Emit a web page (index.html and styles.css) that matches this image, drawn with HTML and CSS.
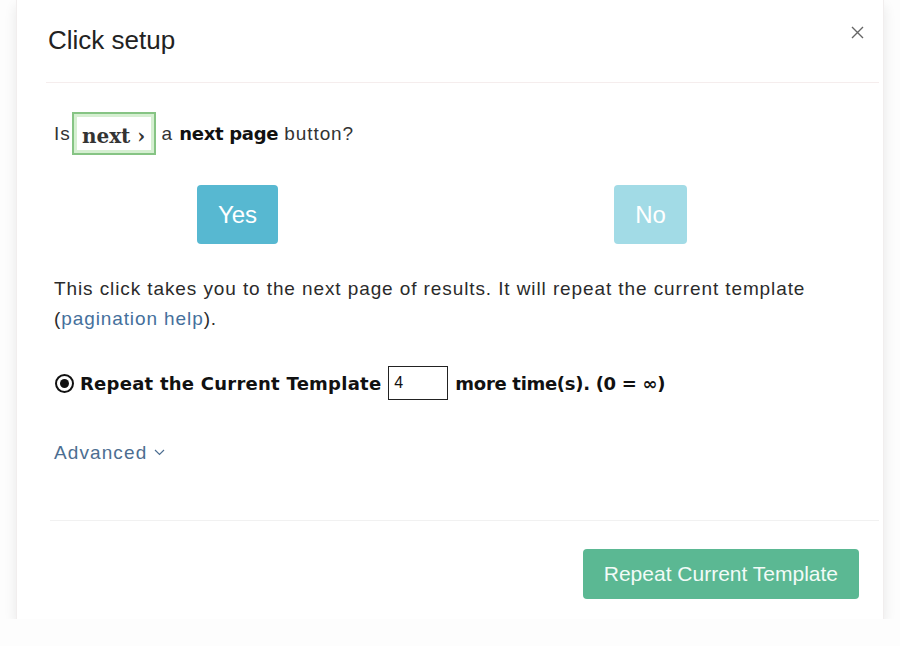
FILE: index.html
```html
<!DOCTYPE html>
<html lang="en">
<head>
<meta charset="utf-8">
<title>Click setup</title>
<link rel="stylesheet" href="styles.css">
</head>
<body>
<div class="modal">
  <div class="modal-header">
    <h1 class="title">Click setup</h1>
    <button class="close" aria-label="Close">
      <svg width="13" height="13" viewBox="0 0 13 13"><path d="M1 1 L12 12 M12 1 L1 12" stroke="#666" stroke-width="1.4" fill="none"/></svg>
    </button>
  </div>
  <div class="modal-body">
    <div class="question">
      <span>Is</span>
      <span class="sample"><span class="sample-text">next ›</span></span>
      <span>a <b>next page</b> button?</span>
    </div>
    <div class="answers">
      <div class="answer"><button class="btn btn-yes">Yes</button></div>
      <div class="answer"><button class="btn btn-no">No</button></div>
    </div>
    <p class="info">This click takes you to the next page of results. It will repeat the current template (<a href="#" class="link">pagination help</a>).</p>
    <div class="repeat-row">
      <span class="radio"></span>
      <span class="strong strong-wide">Repeat the Current Template</span>
      <span class="count">4</span>
      <span class="strong strong-tight">more time(s). (0 = ∞)</span>
    </div>
    <div class="advanced">Advanced<svg class="chev" width="11" height="7" viewBox="0 0 11 7"><path d="M1 1 L5.5 5.5 L10 1" stroke="#4c6e91" stroke-width="1.2" fill="none"/></svg>
    </div>
  </div>
  <div class="modal-footer">
    <button class="btn-repeat">Repeat Current Template</button>
  </div>
</div>
</body>
</html>
```

FILE: styles.css
```css
html, body {
  margin: 0;
  padding: 0;
  background: #fdfdfd;
  font-family: "Liberation Sans", Arial, sans-serif;
  color: #333;
}

.modal {
  margin-left: 16px;
  width: 866px;
  background: #fff;
  border-left: 1px solid #f1eeee;
  border-right: 1px solid #f1eeee;
  box-shadow: 0 6px 12px rgba(0, 0, 0, 0.09);
}

.modal-header {
  height: 82px;
  margin: 0 4px 0 29px;
  border-bottom: 1px solid #f5eded;
  display: flex;
  align-items: center;
  justify-content: space-between;
  padding-right: 15px;
}

.title {
  margin: 0;
  padding-left: 2px;
  font-size: 26px;
  font-weight: normal;
  color: #222;
  line-height: 1;
  margin-top: -3px;
}

.close {
  align-self: flex-start;
  margin-top: 26px;
  padding: 0;
  border: 0;
  background: none;
  width: 13px;
  height: 13px;
  display: block;
}
.close svg { display: block; }

.modal-body {
  padding: 29px 49px 52px 37px;
}

.question {
  display: flex;
  align-items: center;
  height: 43px;
  font-size: 19px;
  letter-spacing: 0.9px;
}

.question b {
  font-family: "DejaVu Sans", Verdana, sans-serif;
  font-size: 18px;
  letter-spacing: -0.3px;
  font-weight: bold;
  color: #111;
}

.sample {
  margin: 0 6px 0 1px;
  width: 84px;
  height: 43px;
  box-sizing: border-box;
  border: 2px solid #86c484;
  box-shadow: inset 0 0 0 3px #d5efd1;
  background: #fff;
  display: flex;
  align-items: center;
  justify-content: center;
  letter-spacing: 0;
}

.sample-text {
  font-family: "DejaVu Serif", "Liberation Serif", serif;
  font-weight: bold;
  font-size: 20px;
  color: #333;
  padding-top: 5px;
}

.answers {
  margin: 30px -23px 0 -23px;
  display: grid;
  grid-template-columns: 1fr 1fr;
}

.answer {
  display: flex;
  justify-content: center;
}

.btn {
  height: 59px;
  padding: 0 21px;
  border: 0;
  border-radius: 4px;
  color: #fff;
  font-family: "Liberation Sans", Arial, sans-serif;
  font-size: 24px;
}

.btn-yes { background: #57b8d1; }
.btn-no { background: #a2dbe6; }

.info {
  margin: 30px 0 0 0;
  font-size: 19px;
  letter-spacing: 0.9px;
  line-height: 30px;
  color: #2b2b2b;
}

.link {
  color: #45709c;
  text-decoration: none;
}

.repeat-row {
  margin-top: 32px;
  display: flex;
  align-items: center;
  height: 34px;
}

.radio {
  width: 19px;
  height: 19px;
  box-sizing: border-box;
  border: 2px solid #111;
  border-radius: 50%;
  margin: 0 6px 0 1px;
  display: flex;
  align-items: center;
  justify-content: center;
}
.radio::after {
  content: "";
  width: 9px;
  height: 9px;
  border-radius: 50%;
  background: #111;
}

.strong {
  font-family: "DejaVu Sans", Verdana, sans-serif;
  font-size: 18px;
  font-weight: bold;
  color: #111;
}

.strong-wide { letter-spacing: 0.25px; }
.strong-tight { letter-spacing: -0.3px; }

.count {
  width: 60px;
  height: 34px;
  box-sizing: border-box;
  border: 1px solid #222;
  margin: 0 7px;
  padding-left: 5px;
  font-size: 16px;
  line-height: 32px;
  color: #111;
}

.advanced {
  margin-top: 38px;
  font-size: 19px;
  letter-spacing: 1.1px;
  line-height: 30px;
  color: #4c6e91;
}

.chev {
  margin-left: 7px;
  vertical-align: 3px;
}

.modal-footer {
  margin: 0 4px 0 33px;
  border-top: 1px solid #f1f1f1;
  padding: 28px 20px 20px 0;
  display: flex;
  justify-content: flex-end;
}

.btn-repeat {
  height: 50px;
  padding: 0 21px;
  border: 0;
  border-radius: 4px;
  background: #5bb893;
  color: #f2fbf7;
  font-family: "Liberation Sans", Arial, sans-serif;
  font-size: 21px;
}
```
